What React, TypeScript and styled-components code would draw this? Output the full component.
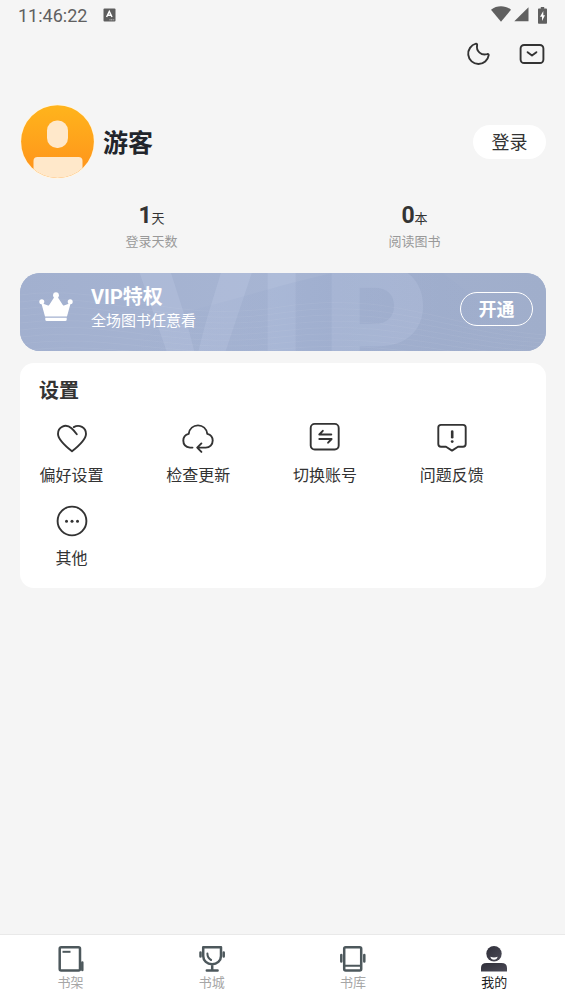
import React from "react";
import styled, { createGlobalStyle } from "styled-components";

const GlobalStyle = createGlobalStyle`
  * { box-sizing: border-box; }
  body {
    margin: 0;
    background: #f5f5f5;
    color: #333;
    font-family: Roboto, "Noto Sans CJK SC", sans-serif;
  }
  button { font-family: inherit; color: inherit; cursor: pointer; padding: 0; border: 0; background: none; }
  h1, h2, p, dl, dd, dt, ul { margin: 0; padding: 0; }
  svg { display: block; }
`;

const Screen = styled.div`
  min-height: 100vh;
  display: flex;
  flex-direction: column;
`;

const StatusBar = styled.header`
  height: 32px;
  padding: 0 18px;
  display: flex;
  align-items: center;
  justify-content: space-between;
  color: #606060;
`;

const StatusGroup = styled.div<{ $gap: number }>`
  display: flex;
  align-items: center;
  gap: ${(p) => p.$gap}px;
  padding-bottom: 2px;
`;

const Clock = styled.time`
  font-size: 18px;
  line-height: 32px;
  padding-top: 2px;
`;

const Content = styled.main`
  flex: 1;
  padding: 0 19px 0 20px;
  display: flex;
  flex-direction: column;
`;

const Toolbar = styled.div`
  height: 44px;
  display: flex;
  align-items: center;
  justify-content: flex-end;
  gap: 26px;
`;

const IconButton = styled.button`
  width: 28px;
  height: 28px;
  display: grid;
  place-items: center;
`;

const Profile = styled.section`
  margin-top: 28px;
  display: flex;
  align-items: center;
  gap: 8px;
`;

const UserName = styled.h1`
  flex: 1;
  padding-top: 4px;
  font-size: 25px;
  line-height: 36px;
  font-weight: 700;
  color: #22252c;
`;

const LoginButton = styled.button`
  width: 73px;
  height: 34px;
  border-radius: 17px;
  background: #fff;
  font-size: 18px;
  line-height: 36px;
`;

const Stats = styled.dl`
  margin-top: 22px;
  display: grid;
  grid-template-columns: 1fr 1fr;
`;

const Stat = styled.div`
  display: flex;
  flex-direction: column-reverse;
  align-items: center;
`;

const StatValue = styled.dd`
  font-size: 13px;
  line-height: 28px;
`;

const StatNumber = styled.strong`
  font-size: 23px;
  font-weight: 700;
`;

const StatLabel = styled.dt`
  font-size: 13px;
  line-height: 18px;
  color: #999;
`;

const VipBanner = styled.section`
  position: relative;
  margin-top: 22px;
  height: 78px;
  padding: 0 13px 0 19px;
  border-radius: 20px;
  overflow: hidden;
  display: flex;
  align-items: center;
  gap: 18px;
  color: #fff;
  background: #a3b1cf;
`;

const BannerArt = styled.svg`
  position: absolute;
  inset: 0;
  width: 100%;
  height: 100%;
`;

const VipInfo = styled.div`
  position: relative;
  flex: 1;
  display: flex;
  align-items: center;
  gap: 18px;
  padding-bottom: 10px;
`;

const VipCopy = styled.div`
  padding-top: 4px;
`;

const VipTitle = styled.h2`
  font-size: 20px;
  line-height: 24px;
  font-weight: 700;
`;

const VipText = styled.p`
  font-size: 15px;
  line-height: 24px;
`;

const OpenButton = styled.button`
  position: relative;
  width: 73px;
  height: 34px;
  margin-bottom: 6px;
  border: 1px solid #fff;
  border-radius: 17px;
  font-size: 18px;
  line-height: 34px;
  font-weight: 700;
  color: #fff;
`;

const Card = styled.section`
  margin-top: 12px;
  padding: 14px 0 17px 19px;
  border-radius: 14px;
  background: #fff;
`;

const CardTitle = styled.h2`
  font-size: 20px;
  line-height: 28px;
  font-weight: 700;
`;

const SettingsGrid = styled.ul`
  margin-top: 17px;
  display: grid;
  grid-template-columns: repeat(4, 1fr);
  row-gap: 17px;
  list-style: none;
`;

const SettingButton = styled.button`
  min-width: 65px;
  display: flex;
  flex-direction: column;
  align-items: center;
  gap: 10px;
  font-size: 16px;
  line-height: 24px;
`;

const TabBar = styled.nav`
  height: 70px;
  padding-top: 10px;
  border-top: 1px solid #e9e9e9;
  background: #fff;
  display: grid;
  grid-template-columns: repeat(4, 1fr);
  align-items: start;
`;

const Tab = styled.button<{ $active?: boolean }>`
  display: flex;
  flex-direction: column;
  align-items: center;
  font-size: 13px;
  line-height: 20px;
  color: ${(p) => (p.$active ? "#222" : "#a6a6a6")};
`;

const line = {
  fill: "none",
  stroke: "#333",
  strokeWidth: 1.9,
  strokeLinecap: "round" as const,
  strokeLinejoin: "round" as const,
};

const tabLine = { ...line, stroke: "#4d585c", strokeWidth: 2.5 };

const InputIcon = () => (
  <svg width="13" height="14" viewBox="0 0 13 14">
    <rect x="0.5" y="0.5" width="12" height="13" rx="1" fill="#5e5e5e" />
    <path d="M3.6 9 6.3 3.4 9 9M4.6 7.2h3.4" fill="none" stroke="#fff" strokeWidth="1.5" />
    <path d="M6.5 11.8h5" stroke="#ccc" strokeWidth="1" strokeDasharray="1 0.6" />
  </svg>
);

const WifiIcon = () => (
  <svg width="20" height="16" viewBox="0 0 20 16">
    <path d="M0 3.7C5.8-.9 14.2-.9 20 3.7L10 15.8z" fill="#606060" />
  </svg>
);

const SignalIcon = () => (
  <svg width="15" height="15" viewBox="0 0 15 15">
    <path d="M14.5 0.3v14H0.3z" fill="#606060" />
  </svg>
);

const BatteryIcon = () => (
  <svg width="9" height="17" viewBox="0 0 9 17">
    <path d="M2.8 0h3.4v1.6H8.2q.8 0 .8.8v13.6q0 .8-.8.8H.8q-.8 0-.8-.8V2.4q0-.8.8-.8h2z" fill="#606060" />
    <path d="M5.3 4 2 9.8h2V14l3-5.8H5.3z" fill="#fff" />
  </svg>
);

const MoonIcon = () => (
  <svg width="24" height="24" viewBox="0 0 24 24">
    <path d="M10 1.7a10.3 10.3 0 1 0 12.700 11.400c.1-1-.8-1.200-1.700-.9C15.500 13.800 9.900 9.400 11.100 3.300c.2-1-.3-1.700-1.100-1.600z" {...line} />
  </svg>
);

const MailIcon = () => (
  <svg width="26" height="22" viewBox="0 0 26 22">
    <rect x="1.6" y="2" width="22.8" height="18" rx="3.5" {...line} />
    <path d="m8.6 9.2 4.400 3.400 4.400-3.400" {...line} />
  </svg>
);

const Avatar = () => (
  <svg width="75" height="76" viewBox="0 0 75 76" role="img" aria-label="头像">
    <defs>
      <linearGradient id="avatarFill" x1="0" y1="0" x2="0" y2="1">
        <stop offset="0" stopColor="#ffb51c" />
        <stop offset="1" stopColor="#ff901b" />
      </linearGradient>
      <clipPath id="avatarClip">
        <circle cx="37.5" cy="37.7" r="36.4" />
      </clipPath>
    </defs>
    <circle cx="37.5" cy="37.7" r="37.4" fill="#fff6e4" />
    <g clipPath="url(#avatarClip)">
      <rect width="75" height="76" fill="url(#avatarFill)" />
      <rect x="27" y="16.500" width="21" height="27.500" rx="10" fill="#ffe8ca" />
      <rect x="13.500" y="53" width="49" height="30" rx="4" fill="#ffe8ca" />
    </g>
  </svg>
);

const CrownIcon = () => (
  <svg width="34" height="30" viewBox="0 0 34 30" fill="#fff">
    <circle cx="17" cy="3.2" r="2.9" />
    <circle cx="2.8" cy="9.8" r="2.5" />
    <circle cx="31.2" cy="9.8" r="2.5" />
    <path d="M2.3 11 9 13.500q.8.200 1.200-.5L16 4h2l5.800 9q.4.700 1.200.5L31.700 11 28 24.500H6z" />
    <path d="M6.3 25.700h21.400v1.700q0 1.600-1.600 1.600H7.900q-1.600 0-1.600-1.600z" />
  </svg>
);

const Watermark = () => (
  <BannerArt viewBox="0 0 525 78" preserveAspectRatio="xMidYMid slice" aria-hidden="true">
    <defs>
      <linearGradient id="bannerFill">
        <stop offset="0" stopColor="#a2b0cf" />
        <stop offset="0.5" stopColor="#a7b5d3" />
        <stop offset="0.8" stopColor="#a1afcd" />
        <stop offset="1" stopColor="#a0aecb" />
      </linearGradient>
      <linearGradient id="sweepFill" x1="0" y1="0" x2="1" y2="0">
        <stop offset="0" stopColor="#8fa1c8" stopOpacity="0" />
        <stop offset="0.45" stopColor="#8fa1c8" stopOpacity="0.22" />
        <stop offset="1" stopColor="#8fa1c8" stopOpacity="0" />
      </linearGradient>
    </defs>
    <rect width="525" height="78" fill="url(#bannerFill)" />
    <g fill="#c3cfe8" fillOpacity="0.27" fontFamily="Inter, sans-serif" fontWeight="800" fontSize="162">
      <text x="113" y="110">V</text>
      <text x="238" y="110">I</text>
      <text x="302" y="110">P</text>
    </g>
    <path d="M150 42C205 30 250 14 312 0h110L525 78H110z" fill="url(#sweepFill)" />
    <g fill="none" stroke="#fff" strokeOpacity="0.05">
      {[0, 1, 2, 3, 4, 5, 6, 7, 8].map((i) => (
        <path key={i} d={`M0 ${22 + i * 7}C90 ${10 + i * 7} 150 ${52 + i * 5} 260 ${34 + i * 6}S430 ${56 + i * 5} 525 ${62 + i * 4}`} />
      ))}
    </g>
  </BannerArt>
);

const HeartIcon = () => (
  <svg width="32" height="32" viewBox="0 0 32 32">
    <path d="M20.800 12.300C18.800 9.600 17 7.600 15.500 6.300 9.500.900 1.900 5.100 2 11.900c.1 5.300 5.800 10.800 14 17.300 8.200-6.500 13.900-12 14-17.300.1-6.500-6.900-9.900-12.200-6.800" {...line} />
  </svg>
);

const CloudIcon = () => (
  <svg width="32" height="32" viewBox="0 0 32 32">
    <path d="M10.500 25.600H8C3.800 25.100 1.300 22.200 1.300 18.500c0-3.300 2.300-5.900 5.400-6.700C7.500 6.700 11.300 3.400 16 3.400s8.500 3.300 9.300 8.400c3.100.8 5.400 3.400 5.400 6.700 0 4-2.900 7.100-7 7.100h-8.500M19.400 21.400l-4.200 4.200 4.200 4.300" {...line} />
  </svg>
);

const SwitchIcon = () => (
  <svg width="32" height="32" viewBox="0 0 32 32">
    <rect x="1.700" y="1.900" width="28" height="25.600" rx="4" {...line} />
    <path d="M22.300 12.500H10.300l3.500-3.700M10.300 17h12.300L19.100 20.700" {...line} />
  </svg>
);

const FeedbackIcon = () => (
  <svg width="32" height="32" viewBox="0 0 32 32">
    <path d="M5 2.900h22q2.700 0 2.700 2.700v16.500q0 2.700-2.700 2.700h-5L16 28.600l-6-3.800H5q-2.700 0-2.700-2.700V5.600q0-2.700 2.700-2.700z" {...line} />
    <path d="M16.200 9.500v5.800" {...line} strokeWidth={2.600} />
    <circle cx="16.200" cy="19.600" r="1.400" fill="#333" />
  </svg>
);

const MoreIcon = () => (
  <svg width="32" height="32" viewBox="0 0 32 32">
    <circle cx="16" cy="16" r="14.4" {...line} />
    <g fill="#333">
      <circle cx="10.5" cy="16.300" r="1.500" />
      <circle cx="16" cy="16.300" r="1.500" />
      <circle cx="21.500" cy="16.300" r="1.500" />
    </g>
  </svg>
);

const ShelfIcon = () => (
  <svg width="28" height="28" viewBox="0 0 28 28">
    <rect x="2.700" y="2.300" width="20.300" height="23.200" rx="1.500" {...tabLine} />
    <path d="M5.500 6.800h8" {...tabLine} strokeWidth={2} strokeLinecap="butt" />
    <path d="M25.300 17.500v7.600" {...tabLine} />
  </svg>
);

const TrophyIcon = () => (
  <svg width="28" height="28" viewBox="0 0 28 28">
    <path d="M5.200 2.300h17.800v8.700c0 4.700-4 8.200-8.900 8.200s-8.900-3.500-8.900-8.200zM14.200 19.500v5.800M8.800 25.500h10.800" {...tabLine} />
    <path d="M9.400 8.500c0 3.200 1.300 5.200 3.700 6.500" {...tabLine} strokeWidth={2} />
    <path d="M2.500 7.500v4M25.700 7.500v4" {...tabLine} />
  </svg>
);

const LibraryIcon = () => (
  <svg width="28" height="28" viewBox="0 0 28 28">
    <rect x="5.200" y="2.300" width="17" height="23.200" rx="1.500" {...tabLine} />
    <path d="M5.500 20.800h16.500" {...tabLine} strokeWidth={2} />
    <path d="M2.300 10v6.500M25.300 10v6.500" {...tabLine} />
  </svg>
);

const MineIcon = () => (
  <svg width="28" height="28" viewBox="0 0 28 28">
    <defs>
      <linearGradient id="mineFill" x1="0" y1="0" x2="1" y2="1">
        <stop offset="0" stopColor="#2f2f39" />
        <stop offset="1" stopColor="#4c4b57" />
      </linearGradient>
    </defs>
    <circle cx="14" cy="8.800" r="7.700" fill="url(#mineFill)" />
    <path d="M1 26.500v-3.600q0-5 5.600-5h14.800q5.600 0 5.600 5v3.600z" fill="url(#mineFill)" />
    <path d="M10.300 11.800q3.700 1.200 7.400 0-.8 3-3.700 3t-3.700-3z" fill="#fff" />
  </svg>
);

const stats = [
  { value: "1", unit: "天", label: "登录天数" },
  { value: "0", unit: "本", label: "阅读图书" },
];

const settings = [
  { label: "偏好设置", Icon: HeartIcon },
  { label: "检查更新", Icon: CloudIcon },
  { label: "切换账号", Icon: SwitchIcon },
  { label: "问题反馈", Icon: FeedbackIcon },
  { label: "其他", Icon: MoreIcon },
];

const tabs = [
  { label: "书架", Icon: ShelfIcon },
  { label: "书城", Icon: TrophyIcon },
  { label: "书库", Icon: LibraryIcon },
  { label: "我的", Icon: MineIcon, active: true },
];

export default function App() {
  return (
    <Screen>
      <GlobalStyle />
      <StatusBar>
        <StatusGroup $gap={16}>
          <Clock>11:46:22</Clock>
          <InputIcon />
        </StatusGroup>
        <StatusGroup $gap={9}>
          <StatusGroup $gap={3}>
            <WifiIcon />
            <SignalIcon />
          </StatusGroup>
          <BatteryIcon />
        </StatusGroup>
      </StatusBar>
      <Content>
        <Toolbar>
          <IconButton type="button" aria-label="夜间模式">
            <MoonIcon />
          </IconButton>
          <IconButton type="button" aria-label="消息">
            <MailIcon />
          </IconButton>
        </Toolbar>
        <Profile>
          <Avatar />
          <UserName>游客</UserName>
          <LoginButton type="button">登录</LoginButton>
        </Profile>
        <Stats>
          {stats.map((s) => (
            <Stat key={s.label}>
              <StatLabel>{s.label}</StatLabel>
              <StatValue>
                <StatNumber>{s.value}</StatNumber>
                {s.unit}
              </StatValue>
            </Stat>
          ))}
        </Stats>
        <VipBanner>
          <Watermark />
          <VipInfo>
            <CrownIcon />
            <VipCopy>
              <VipTitle>VIP特权</VipTitle>
              <VipText>全场图书任意看</VipText>
            </VipCopy>
          </VipInfo>
          <OpenButton type="button">开通</OpenButton>
        </VipBanner>
        <Card>
          <CardTitle>设置</CardTitle>
          <SettingsGrid>
            {settings.map(({ label, Icon }) => (
              <li key={label}>
                <SettingButton type="button">
                  <Icon />
                  {label}
                </SettingButton>
              </li>
            ))}
          </SettingsGrid>
        </Card>
      </Content>
      <TabBar>
        {tabs.map(({ label, Icon, active }) => (
          <Tab key={label} type="button" $active={active} aria-current={active ? "page" : undefined}>
            <Icon />
            {label}
          </Tab>
        ))}
      </TabBar>
    </Screen>
  );
}
